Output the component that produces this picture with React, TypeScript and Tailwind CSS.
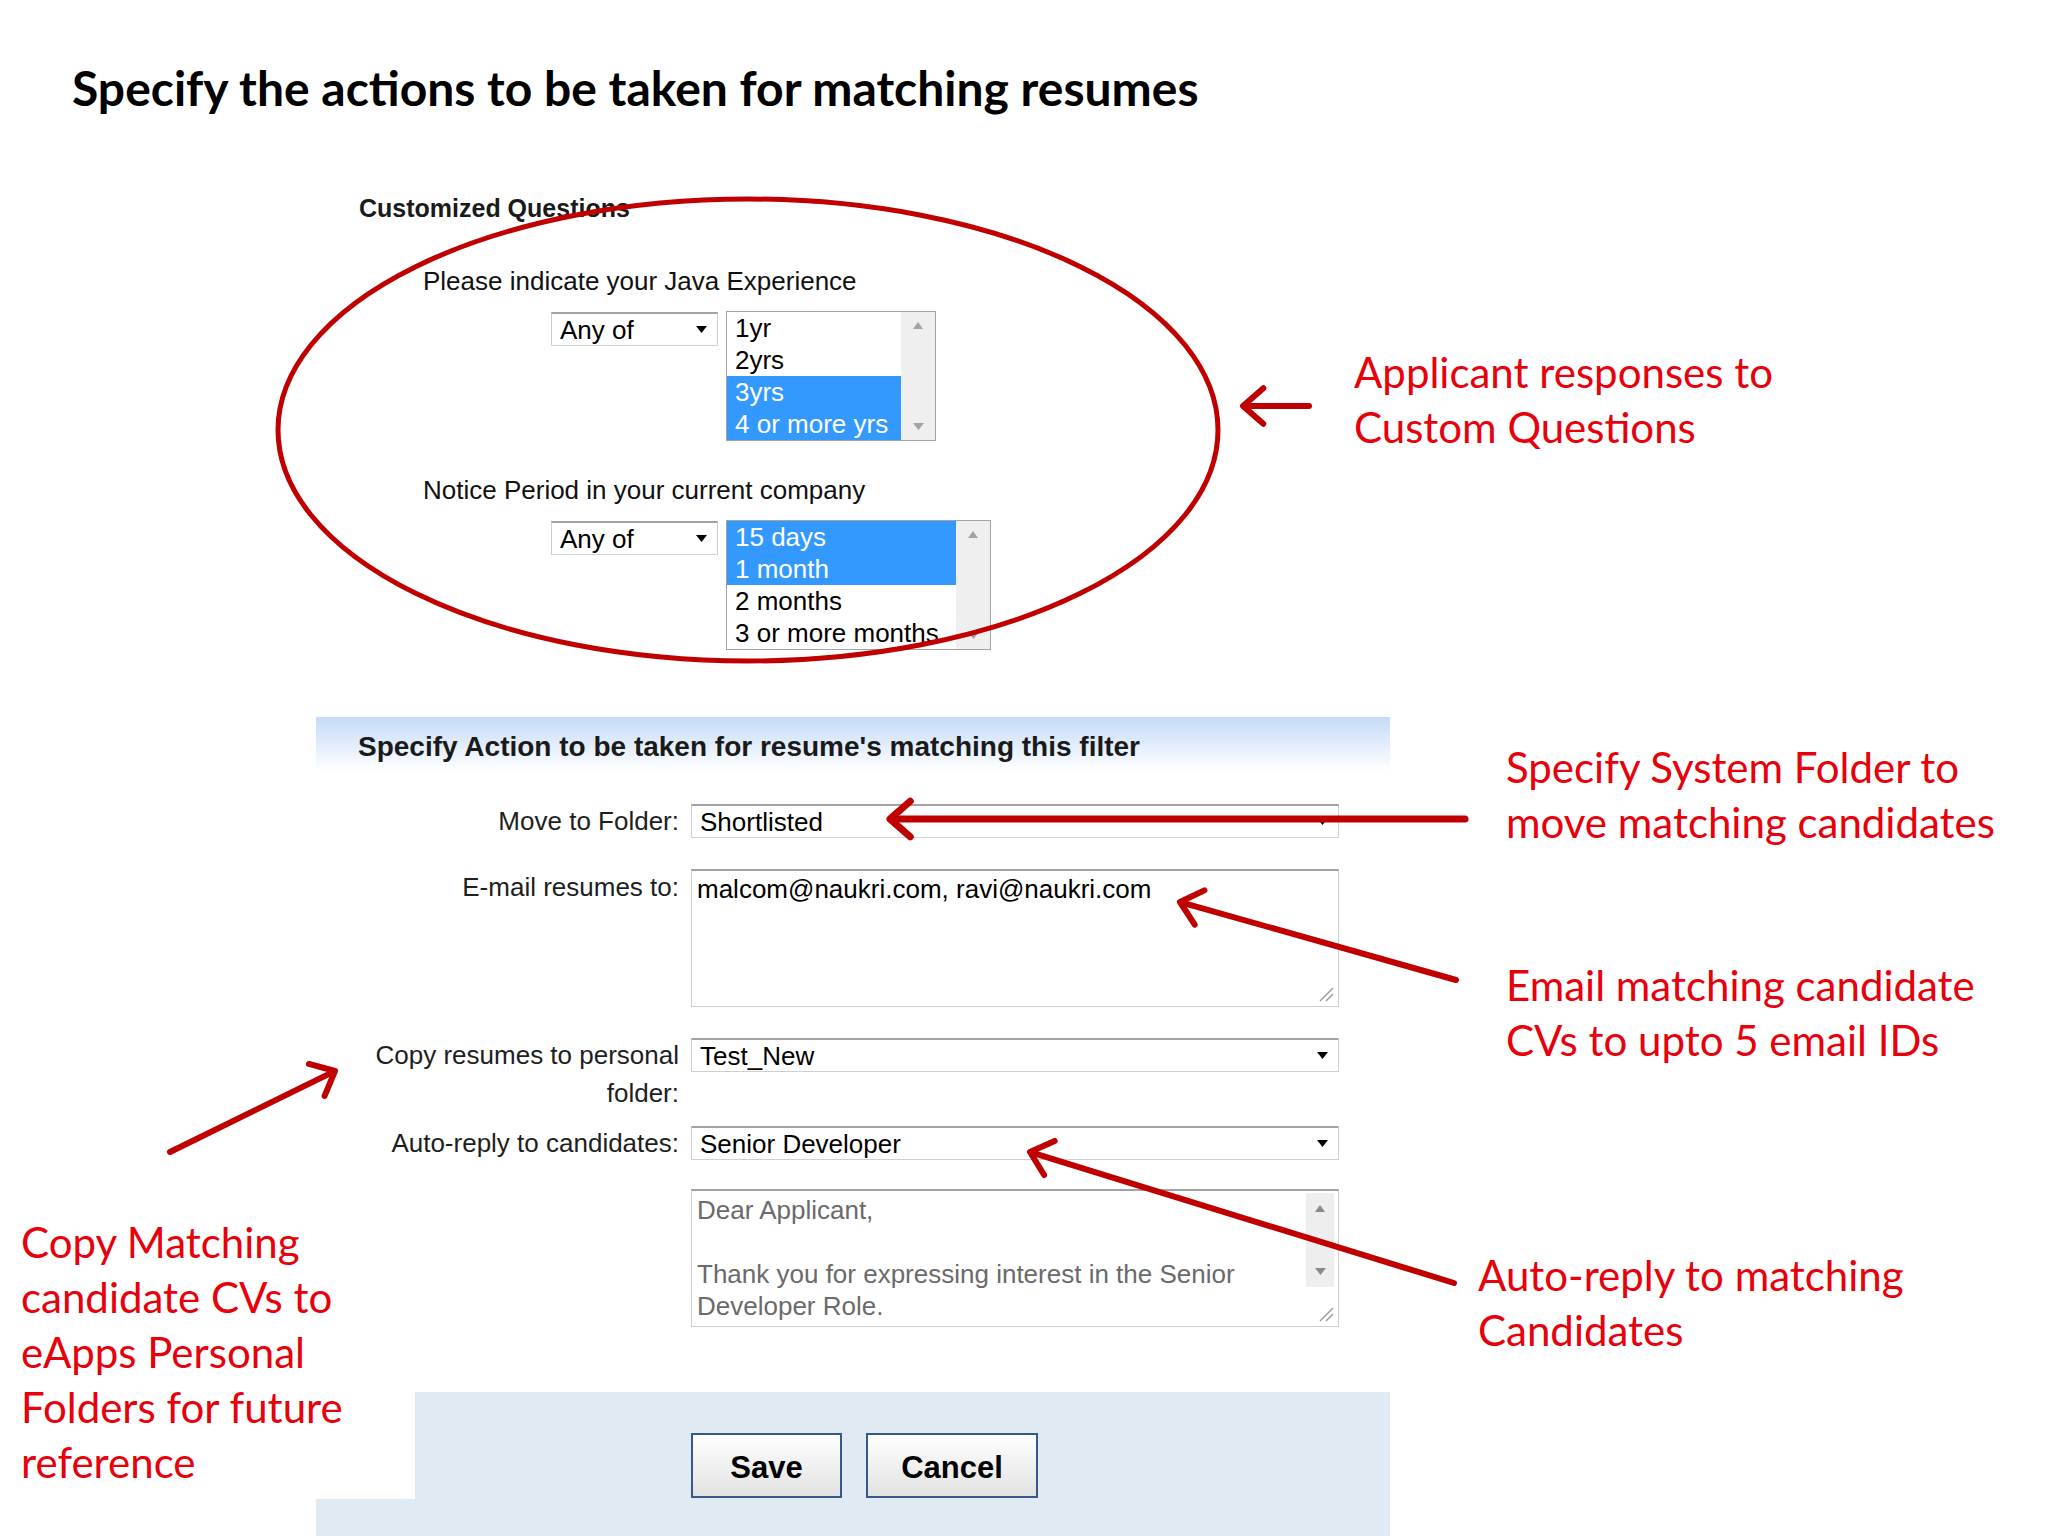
const RED = "#c00000";

type Item = { label: string; selected?: boolean };

const javaOptions: Item[] = [
  { label: "1yr" },
  { label: "2yrs" },
  { label: "3yrs", selected: true },
  { label: "4 or more yrs", selected: true },
];

const noticeOptions: Item[] = [
  { label: "15 days", selected: true },
  { label: "1 month", selected: true },
  { label: "2 months" },
  { label: "3 or more months" },
];

const DownTri = ({ color = "#000" }: { color?: string }) => (
  <svg width="11" height="7" viewBox="0 0 11 7">
    <polygon points="0,0 11,0 5.5,7" fill={color} />
  </svg>
);

const UpTri = ({ color = "#a3a3a3" }: { color?: string }) => (
  <svg width="10" height="7" viewBox="0 0 10 7">
    <polygon points="0,7 10,7 5,0" fill={color} />
  </svg>
);

const Grip = () => (
  <svg className="absolute bottom-[4px] right-[4px]" width="16" height="16" viewBox="0 0 16 16">
    <line x1="15" y1="2" x2="2" y2="15" stroke="#9a9a9a" strokeWidth="1.4" />
    <line x1="15" y1="8" x2="8" y2="15" stroke="#9a9a9a" strokeWidth="1.4" />
  </svg>
);

const Select = ({ value, className }: { value: string; className: string }) => (
  <div
    className={`flex h-[34px] items-center justify-between border border-[#cfcfcf] border-t-2 border-t-[#a2a2a2] bg-white pl-[8px] pr-[10px] text-[26px] leading-[30px] ${className}`}
  >
    <span>{value}</span>
    <DownTri />
  </div>
);

const ListBox = ({ items, className }: { items: Item[]; className: string }) => (
  <div className={`flex h-[130px] border border-[#a3a3a3] bg-white ${className}`}>
    <div className="flex-1">
      {items.map((it) => (
        <div
          key={it.label}
          className={`h-[32px] pl-[8px] text-[26px] leading-[32px] whitespace-nowrap ${
            it.selected ? "bg-[#3399ff] text-white" : "text-black"
          }`}
        >
          {it.label}
        </div>
      ))}
    </div>
    <div className="flex w-[34px] flex-col items-center justify-between bg-[#efefef] py-[10px]">
      <UpTri />
      <DownTri color="#a3a3a3" />
    </div>
  </div>
);

const Arrow = ({ x1, y1, x2, y2, w = 6 }: { x1: number; y1: number; x2: number; y2: number; w?: number }) => {
  const a = Math.atan2(y1 - y2, x1 - x2);
  const L = 27;
  const s = 0.72;
  const p1 = `${x2 + L * Math.cos(a + s)},${y2 + L * Math.sin(a + s)}`;
  const p2 = `${x2 + L * Math.cos(a - s)},${y2 + L * Math.sin(a - s)}`;
  return (
    <g stroke={RED} strokeWidth={w} fill="none" strokeLinecap="round" strokeLinejoin="round">
      <line x1={x1} y1={y1} x2={x2 + 2 * Math.cos(a)} y2={y2 + 2 * Math.sin(a)} />
      <polyline points={`${p1} ${x2},${y2} ${p2}`} />
    </g>
  );
};

const Row = ({
  label,
  labelClass = "leading-[34px]",
  children,
  className = "",
}: {
  label: React.ReactNode;
  labelClass?: string;
  children: React.ReactNode;
  className?: string;
}) => (
  <div className={`flex items-start gap-[12px] ${className}`}>
    <div className={`w-[363px] shrink-0 text-right text-[26px] text-[#1e1e1e] ${labelClass}`}>{label}</div>
    <div className="w-[648px]">{children}</div>
  </div>
);

export default function App() {
  return (
    <div className="relative h-[1536px] w-[2048px] overflow-hidden bg-white font-['Liberation_Sans',Arial,sans-serif] text-black">
      <h1 className="pl-[72px] pt-[58px] font-['Lato',sans-serif] text-[48px] font-bold leading-[60px] text-black">
        Specify the actions to be taken for matching resumes
      </h1>

      <div className="ml-[316px] w-[1074px]">
        {/* Customized questions */}
        <div className="mt-[75px] pl-[43px] text-[25px] font-bold leading-[30px] text-[#1a1a1a]">Customized Questions</div>

        <div className="mt-[43px] pl-[107px] text-[26px] leading-[30px] text-[#111]">Please indicate your Java Experience</div>
        <div className="mt-[15px] flex items-start gap-[8px] pl-[235px]">
          <Select value="Any of" className="mt-px w-[167px]" />
          <ListBox items={javaOptions} className="w-[210px]" />
        </div>

        <div className="mt-[34px] pl-[107px] text-[26px] leading-[30px] text-[#111]">Notice Period in your current company</div>
        <div className="mt-[15px] flex items-start gap-[8px] pl-[235px]">
          <Select value="Any of" className="mt-px w-[167px]" />
          <ListBox items={noticeOptions} className="w-[265px]" />
        </div>

        {/* Actions */}
        <div className="mt-[67px] flex h-[54px] items-center bg-gradient-to-b from-[#c4daf7] to-white pl-[42px] pt-[6px] text-[28px] font-bold text-[#1a1a1a]">
          Specify Action to be taken for resume's matching this filter
        </div>

        <div className="mt-[33px]">
          <Row label="Move to Folder:">
            <Select value="Shortlisted" className="w-full" />
          </Row>

          <Row label="E-mail resumes to:" labelClass="leading-[36px]" className="mt-[31px]">
            <div className="relative h-[138px] border border-[#cfcfcf] border-t-2 border-t-[#a2a2a2] bg-white pl-[5px] pt-[2px] text-[26px] leading-[32px]">
              malcom@naukri.com, ravi@naukri.com
              <Grip />
            </div>
          </Row>

          <Row
            label={
              <>
                Copy resumes to personal
                <br />
                folder:
              </>
            }
            labelClass="-mt-[2px] leading-[38px]"
            className="mt-[31px]"
          >
            <Select value="Test_New" className="w-full" />
          </Row>

          <Row label="Auto-reply to candidates:" className="mt-[14px]">
            <Select value="Senior Developer" className="w-full" />
          </Row>

          <Row label="" className="mt-[29px]">
            <div className="relative flex h-[138px] border border-[#cfcfcf] border-t-2 border-t-[#a2a2a2] bg-white">
              <div className="flex-1 pl-[5px] pt-[3px] text-[26px] leading-[32px] text-[#6a6a6a]">
                Dear Applicant,
                <br />
                <br />
                Thank you for expressing interest in the Senior
                <br />
                Developer Role.
              </div>
              <div className="mr-[4px] mt-[2px] flex h-[94px] w-[28px] flex-col items-center justify-between bg-[#eeeeee] py-[12px]">
                <UpTri color="#8a8a8a" />
                <DownTri color="#8a8a8a" />
              </div>
              <Grip />
            </div>
          </Row>
        </div>

        <div className="mt-[65px] flex h-[144px] items-start gap-[24px] bg-[#dfeaf3] pl-[375px] pt-[41px]">
          <button className="h-[65px] w-[151px] border-2 border-[#34598a] bg-gradient-to-b from-white to-[#e2e2e2] pt-[5px] text-[31px] font-bold text-black">
            Save
          </button>
          <button className="h-[65px] w-[172px] border-2 border-[#34598a] bg-gradient-to-b from-white to-[#e2e2e2] pt-[5px] text-[31px] font-bold text-black">
            Cancel
          </button>
        </div>
      </div>

      {/* Red callouts */}
      <div className="absolute left-[1354px] top-[345px] font-['Lato',sans-serif] text-[42px] leading-[55px] text-[#e8000b]">
        Applicant responses to
        <br />
        Custom Questions
      </div>
      <div className="absolute left-[1506px] top-[740px] font-['Lato',sans-serif] text-[42px] leading-[55px] text-[#e8000b]">
        Specify System Folder to
        <br />
        move matching candidates
      </div>
      <div className="absolute left-[1506px] top-[958px] font-['Lato',sans-serif] text-[42px] leading-[55px] text-[#e8000b]">
        Email matching candidate
        <br />
        CVs to upto 5 email IDs
      </div>
      <div className="absolute left-[1478px] top-[1248px] font-['Lato',sans-serif] text-[42px] leading-[55px] text-[#e8000b]">
        Auto-reply to matching
        <br />
        Candidates
      </div>
      <div className="absolute left-0 top-[1200px] h-[299px] w-[415px] bg-white pl-[21px] pt-[15px] font-['Lato',sans-serif] text-[42px] leading-[55px] text-[#e8000b]">
        Copy Matching
        <br />
        candidate CVs to
        <br />
        eApps Personal
        <br />
        Folders for future
        <br />
        reference
      </div>

      {/* Ellipse and arrows */}
      <svg className="pointer-events-none absolute left-0 top-0" width="2048" height="1536" viewBox="0 0 2048 1536">
        <ellipse cx="748" cy="430" rx="470" ry="231" fill="none" stroke={RED} strokeWidth="5" />
        <Arrow x1={1309} y1={406} x2={1243} y2={406} />
        <Arrow x1={1465} y1={819} x2={890} y2={819} w={7} />
        <Arrow x1={1456} y1={980} x2={1180} y2={902} />
        <Arrow x1={1454} y1={1283} x2={1030} y2={1152} />
        <Arrow x1={170} y1={1152} x2={335} y2={1071} />
      </svg>
    </div>
  );
}
